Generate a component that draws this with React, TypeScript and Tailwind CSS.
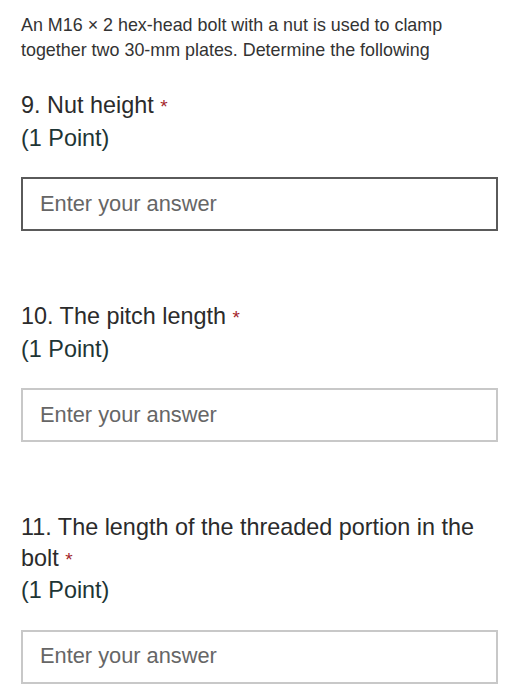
const questions = [
  { num: '10.', title: 'The pitch length', active: false },
  { num: '11.', title: 'The length of the threaded portion in the bolt', active: false },
];

function Question({ num, title, active }: { num: string; title: string; active: boolean }) {
  return (
    <div className="flex flex-col">
      <div className="text-[23.4px] leading-[30.5px] text-[#2b2b2b]">
        {num} {title} <span className="text-[#a4262c] text-[19px]">*</span>
      </div>
      <div className="text-[23.4px] leading-[30.5px] text-[#1d3535]">(1 Point)</div>
      <div
        className={
          active
            ? 'mt-[24px] h-[54px] border-2 border-[#5a5a5a] flex items-center pl-[17px]'
            : 'mt-[24px] h-[54px] border-2 border-[#c8c8c8] flex items-center pl-[17px]'
        }
      >
        <input
          placeholder="Enter your answer"
          className="w-full bg-transparent outline-none text-[21.8px] placeholder:text-[#666666] text-[#333]"
        />
      </div>
    </div>
  );
}

export default function App() {
  return (
    <div className="min-h-[700px] bg-white px-[21px] pt-[13px] font-['Liberation_Sans',Arial,sans-serif]">
      <p className="text-[17.9px] leading-[24.5px] text-[#333333]">
        An M16 × 2 hex-head bolt with a nut is used to clamp together two 30-mm plates. Determine the following
      </p>
      <div className="mt-[28px] flex flex-col gap-[70px]">
        <Question num="9." title="Nut height" active />
        {questions.map((q) => (
          <Question key={q.num} {...q} />
        ))}
      </div>
    </div>
  );
}
